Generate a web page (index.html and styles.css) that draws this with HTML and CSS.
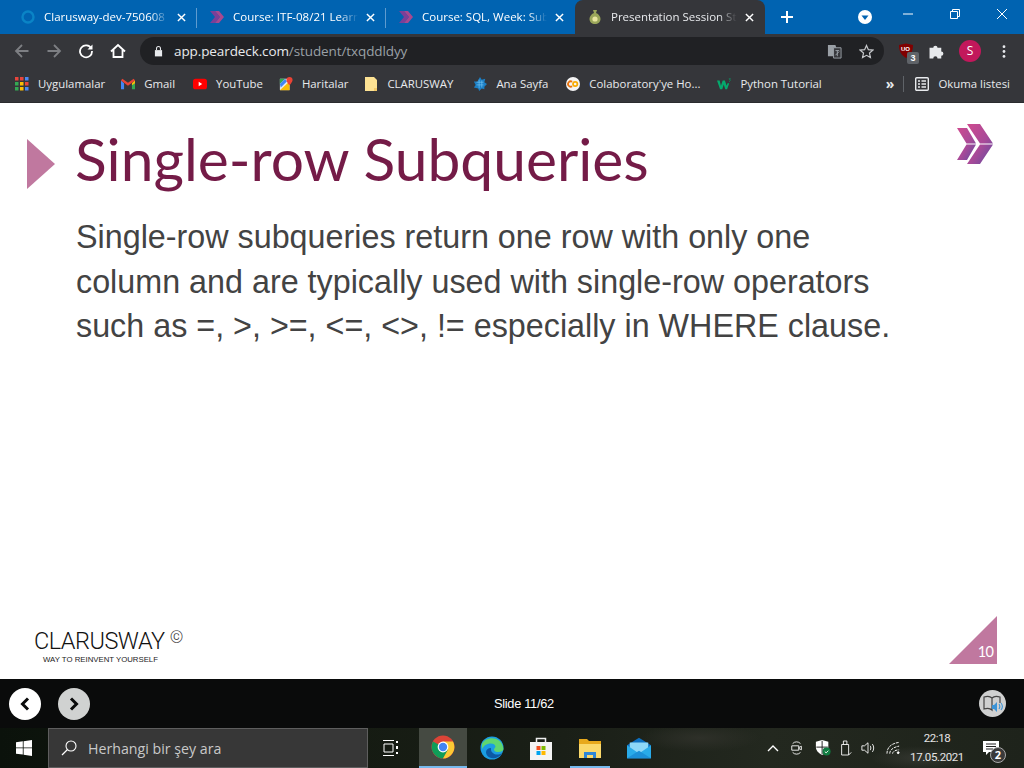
FILE: index.html
```html
<!DOCTYPE html>
<html lang="tr">
<head>
    <meta charset="UTF-8">
    <title>Presentation Session Student</title>
    <link rel="stylesheet" href="styles.css">
</head>
<body>
    <div class="tabbar">
        <div class="tab">
            <svg class="tab-icon" viewBox="0 0 16 16"><circle cx="8" cy="8" r="5.5" fill="none" stroke="#0a84c6" stroke-width="2.4"/></svg>
            <span class="tab-title">Clarusway-dev-750608</span>
            <svg class="tab-close" viewBox="0 0 10 10"><path d="M1 1l8 8M9 1l-8 8"/></svg>
        </div>
        <div class="tab-sep"></div>
        <div class="tab">
            <svg class="tab-icon" viewBox="0 0 16 16"><path d="M1 2h5l5 6-5 6H1l5-6z" fill="#7b3f98"/><path d="M6 2h4l5 6-5 6H6l5-6z" fill="#a8488f"/></svg>
            <span class="tab-title">Course: ITF-08/21 Learn</span>
            <svg class="tab-close" viewBox="0 0 10 10"><path d="M1 1l8 8M9 1l-8 8"/></svg>
        </div>
        <div class="tab-sep"></div>
        <div class="tab">
            <svg class="tab-icon" viewBox="0 0 16 16"><path d="M1 2h5l5 6-5 6H1l5-6z" fill="#7b3f98"/><path d="M6 2h4l5 6-5 6H6l5-6z" fill="#a8488f"/></svg>
            <span class="tab-title">Course: SQL, Week: Sub</span>
            <svg class="tab-close" viewBox="0 0 10 10"><path d="M1 1l8 8M9 1l-8 8"/></svg>
        </div>
        <div class="tab tab-active">
            <svg class="tab-icon" viewBox="0 0 16 16"><path d="M6 1h4l-1 3c3 1 4.500 4 4.500 6 0 3-2.500 5-5.500 5s-5.500-2-5.500-5c0-2 1.500-5 4.500-6z" fill="#9aa65a"/><circle cx="8" cy="10" r="2.600" fill="#e8e6a0"/></svg>
            <span class="tab-title">Presentation Session Student</span>
            <svg class="tab-close" viewBox="0 0 10 10"><path d="M1 1l8 8M9 1l-8 8"/></svg>
        </div>
        <svg class="new-tab" viewBox="0 0 12 12"><path d="M6 0v12M0 6h12"/></svg>
        <svg class="tab-search" viewBox="0 0 14 14"><circle cx="7" cy="7" r="7" fill="#fff"/><path d="M3.500 5.500h7L7 10z" fill="#0063b1"/></svg>
        <div class="win-controls">
            <svg viewBox="0 0 12 12"><path d="M1 6h10"/></svg>
            <svg viewBox="0 0 12 12"><path d="M1.500 3.500h7v7h-7zM3.500 3.500v-2h7v7h-2"/></svg>
            <svg viewBox="0 0 12 12"><path d="M1 1l10 10M11 1L1 11"/></svg>
        </div>
    </div>

    <div class="toolbar">
        <svg class="tool-icon dim" viewBox="0 0 16 16"><path d="M14.500 8H2M8 2L2 8l6 6"/></svg>
        <svg class="tool-icon dim" viewBox="0 0 16 16"><path d="M1.500 8H14M8 2l6 6-6 6"/></svg>
        <svg class="tool-icon" viewBox="0 0 16 16"><path d="M13.300 5.500A6 6 0 1 0 14 8"/><path class="solid" d="M14.500 1.500v5h-5z"/></svg>
        <svg class="tool-icon" viewBox="0 0 16 16"><path d="M1 8.500L8 2l7 6.500M3.500 7v7h9V7"/></svg>
        <div class="omnibox">
            <svg class="lock" viewBox="0 0 10 12"><path d="M1 5h8v7H1z" fill="#e8eaed"/><path d="M2.800 5V3.200a2.200 2.200 0 0 1 4.400 0V5" fill="none" stroke="#e8eaed" stroke-width="1.200"/></svg>
            <span class="url"><span class="url-host">app.peardeck.com</span>/student/txqddldyy</span>
            <svg class="translate" viewBox="0 0 16 16"><path d="M1 1h8l1 3v9H1z" fill="#9aa0a6"/><path d="M7 4h8v11H7z" fill="#35363a" stroke="#9aa0a6"/><path d="M9 7h4M11 7v6M9 12l4-4" stroke="#9aa0a6" fill="none"/></svg>
            <svg class="star" viewBox="0 0 16 16"><path d="M8 1.500l2 4.500 4.800.5-3.600 3.200 1 4.800L8 12.100l-4.200 2.400 1-4.800L1.200 6.500 6 6z"/></svg>
        </div>
        <div class="ublock">
            <svg viewBox="0 0 16 16"><path d="M1 2l7-1.500L15 2c0 6-2 10-7 13C3 12 1 8 1 2z" fill="#800000"/></svg>
            <span class="ublock-label">UO</span>
            <span class="ublock-badge">3</span>
        </div>
        <svg class="puzzle" viewBox="0.500 0.500 15 15"><path d="M1 5h3.500a2 2 0 1 1 4 0H12v3.500a2 2 0 1 1 0 4V15H8.500a2 2 0 1 0-4 0H1z" fill="#e8eaed"/></svg>
        <div class="avatar">S</div>
        <svg class="dots" viewBox="0 0 4 16"><circle cx="2" cy="2" r="1.700"/><circle cx="2" cy="8" r="1.700"/><circle cx="2" cy="14" r="1.700"/></svg>
    </div>

    <div class="bookmarks">
        <div class="bm bm-apps">
            <svg viewBox="0 0 14 14"><g>
                <rect x="0" y="0" width="3.500" height="3.500" fill="#e8453c"/><rect x="5" y="0" width="3.500" height="3.500" fill="#e8453c"/><rect x="10" y="0" width="3.500" height="3.500" fill="#4a89f3"/>
                <rect x="0" y="5" width="3.500" height="3.500" fill="#34a853"/><rect x="5" y="5" width="3.500" height="3.500" fill="#fbbc05"/><rect x="10" y="5" width="3.500" height="3.500" fill="#e8453c"/>
                <rect x="0" y="10" width="3.500" height="3.500" fill="#34a853"/><rect x="5" y="10" width="3.500" height="3.500" fill="#fbbc05"/><rect x="10" y="10" width="3.500" height="3.500" fill="#4a89f3"/>
            </g></svg>
            Uygulamalar
        </div>
        <div class="bm bm-gmail">
            <svg viewBox="0 0 16 12"><path d="M0 2v10h3.500V5z" fill="#4285f4"/><path d="M16 2v10h-3.500V5z" fill="#34a853"/><path d="M0 2l8 6 8-6-1.500-2L8 4.500 1.500 0z" fill="#ea4335"/><path d="M12.500 5L16 2v3l-3.500 2.500z" fill="#fbbc05"/></svg>
            Gmail
        </div>
        <div class="bm bm-youtube">
            <svg viewBox="0 0 16 12"><rect width="16" height="12" rx="3" fill="#f00"/><path d="M6.500 3.500v5L10.500 6z" fill="#fff"/></svg>
            YouTube
        </div>
        <div class="bm bm-maps">
            <svg viewBox="0 0 16 16"><path d="M1 2h11v13H1z" fill="#e8eaed"/><path d="M1 2h6L1 8z" fill="#34a853"/><path d="M1 15L11 6l1 1v8z" fill="#fbbc05"/><path d="M1 8l6-6 2 3-7 7z" fill="#4285f4"/><path d="M12 0a3.500 3.500 0 0 1 3.500 3.500C15.500 6 12 9.500 12 9.500S8.500 6 8.500 3.500A3.500 3.500 0 0 1 12 0z" fill="#ea4335"/></svg>
            Haritalar
        </div>
        <div class="bm bm-folder">
            <svg viewBox="0 0 12 14"><path d="M0 0h9l3 3v11H0z" fill="#fde293"/><path d="M9 11h3v3H9z" fill="#f3c969"/></svg>
            CLARUSWAY
        </div>
        <div class="bm bm-home">
            <svg viewBox="0 0 16 16"><path d="M8 0l2 3 4-1-1 4 3 2-3 3v3l-3-1-3 3-1-3-5-1 2-3-2-4 4 0z" fill="#1c7fc4"/><path d="M4 6h8M4 9h8M7 3v10M10 4v8" stroke="#6fc0ef" stroke-width=".8"/></svg>
            Ana Sayfa
        </div>
        <div class="bm bm-colab">
            <svg viewBox="0 0 16 16"><circle cx="8" cy="8" r="8" fill="#f4f4f4"/><path d="M7 5.500a3 3 0 1 0 0 5" fill="none" stroke="#e8710a" stroke-width="2"/><circle cx="10.500" cy="8" r="2.500" fill="none" stroke="#f9ab00" stroke-width="2"/></svg>
            Colaboratory'ye Ho...
        </div>
        <div class="bm bm-w3">
            <svg viewBox="0 0 16 12"><path d="M0 2h3l1.500 6L6.500 2H9l2 6 1-3h2l-2.500 7H9.500L7.700 6.500 6 12H3.500z" fill="#04aa6d"/><path d="M13.500 0h2l-1 1.200c1 .3.800 2-.8 1.800" fill="none" stroke="#04aa6d" stroke-width=".7"/></svg>
            Python Tutorial
        </div>
        <span class="bm-more">»</span>
        <div class="bm-sep"></div>
        <div class="bm bm-reading">
            <svg viewBox="0 0 14 14"><rect x=".7" y=".7" width="12.600" height="12.600" rx="1" fill="none" stroke="#e8eaed" stroke-width="1.400"/><path d="M3 4h2M3 7h2M3 10h2M6.500 4h4.500M6.500 7h4.500M6.500 10h4.500" stroke="#e8eaed" stroke-width="1.300"/></svg>
            Okuma listesi
        </div>
    </div>

    <main class="slide">
        <div class="slide-head">
            <div class="head-arrow"></div>
            <h1 class="slide-title">Single-row Subqueries</h1>
            <svg class="slide-mark" viewBox="0 0 36 40">
                <defs><linearGradient id="mark" x1="0" y1="0" x2="1" y2="1"><stop offset="0" stop-color="#cf4a8f"/><stop offset=".55" stop-color="#a84a98"/><stop offset="1" stop-color="#5d4aa0"/></linearGradient></defs>
                <path d="M0 4h10l9 15.500H9.500zM9.500 20.500H19L10 36H0z" fill="url(#mark)"/>
                <path d="M10 0h13l13 19.500H23zM23 20.500h13L23 40H10z" fill="url(#mark)"/>
            </svg>
        </div>
        <p class="slide-text">Single-row subqueries return one row with only one column and are typically used with single-row operators such as =, &gt;, &gt;=, &lt;=, &lt;&gt;, != especially in WHERE clause.</p>
        <div class="slide-foot">
            <div class="logo">
                <div class="logo-name">CLARUSWAY<span class="logo-c">©</span></div>
                <div class="logo-sub">WAY TO REINVENT YOURSELF</div>
            </div>
            <div class="page-corner"><span class="page-num">10</span></div>
        </div>
    </main>

    <div class="deck-nav">
        <div class="deck-btns">
            <button class="deck-btn"><svg viewBox="0 0 10 14"><path d="M8 1.500L2.500 7 8 12.500"/></svg></button>
            <button class="deck-btn deck-btn-next"><svg viewBox="0 0 10 14"><path d="M2 1.500L7.500 7 2 12.500"/></svg></button>
        </div>
        <span class="deck-count">Slide 11/62</span>
        <div class="deck-audio">
            <svg viewBox="0 0 20 18"><path d="M1 2c3-1 6-1 8 1v12c-2-2-5-2-8-1z" fill="none" stroke="#444" stroke-width="1.200"/><path d="M9 3c2-2 5-2 8-1v6" fill="none" stroke="#444" stroke-width="1.200"/><path d="M9 10h2l3-3v10l-3-3H9z" fill="#3c93d6"/><path d="M16 9c1 1.500 1 3.500 0 5M18 8c1.600 2 1.600 5 0 7" fill="none" stroke="#3c93d6" stroke-width="1.100"/></svg>
        </div>
    </div>

    <footer class="taskbar">
        <svg class="start" viewBox="0 0 16 16"><path d="M0 2.300l6.800-1v6.200H0zM7.600 1.200L16 0v7.500H7.600zM0 8.300h6.800v6.300L0 13.700zM7.600 8.300H16V16l-8.400-1.200z" fill="#fff"/></svg>
        <div class="search-box">
            <svg viewBox="0 0 16 16"><circle cx="10" cy="6" r="5" fill="none" stroke="#fff" stroke-width="1.100"/><path d="M6.500 9.500L1 15" stroke="#fff" stroke-width="1.200"/></svg>
            <span>Herhangi bir şey ara</span>
        </div>
        <svg class="task-view" viewBox="0 0 16 16"><path d="M0 .5h11M0 15.500h11M1 4h9v8H1z" fill="none" stroke="#fff"/><path d="M14 1v2M14 6v3M14 12v2" stroke="#fff" stroke-width="2"/></svg>
        <div class="task-app task-chrome">
            <svg viewBox="0 0 24 24"><circle cx="12" cy="12" r="11.500" fill="#db4437"/><path d="M12 12L2 6.500A11.500 11.500 0 0 0 12 23.500l5.500-9.500z" fill="#0f9d58"/><path d="M12 6.500h10A11.500 11.500 0 0 1 12 23.500l5-9z" fill="#fcc934"/><circle cx="12" cy="12" r="5.400" fill="#fff"/><circle cx="12" cy="12" r="4.200" fill="#4285f4"/></svg>
        </div>
        <div class="task-app">
            <svg viewBox="0 0 24 24"><circle cx="12" cy="12" r="11.500" fill="#1b9de2"/><path d="M2 8c3-8 20-9 21.500 5 0 2-2.500 3-5 3-4 0-6-2-3-5 0-2-2-4-6-3.500C6 8 3.500 10 2 13z" fill="#5fd66f"/><path d="M6 16c0 5 6 8 12 5 2-1 3-2 4-4-3 2-7 2-9 0-2-1-2-3-2-5-3 0-5 2-5 4z" fill="#0c59a4"/></svg>
        </div>
        <div class="task-app">
            <svg viewBox="0 0 24 24"><path d="M1 6h22v18H1z" fill="#f4f4f4"/><path d="M7.500 7V2.500h9V7" fill="none" stroke="#eee" stroke-width="1.500"/><rect x="7.500" y="10" width="4" height="4" fill="#f25022"/><rect x="12.500" y="10" width="4" height="4" fill="#7fba00"/><rect x="7.500" y="15" width="4" height="4" fill="#00a4ef"/><rect x="12.500" y="15" width="4" height="4" fill="#ffb900"/></svg>
        </div>
        <div class="task-app task-open">
            <svg viewBox="0 0 24 24"><path d="M1 3h8l2 2h12v17H1z" fill="#e8a91c"/><path d="M1 8h22v14H1z" fill="#fbd96b"/><path d="M6 16h12v6h-3v-3H9v3H6z" fill="#2f86d6"/></svg>
        </div>
        <div class="task-app">
            <svg viewBox="0 0 26 24"><path d="M0 9L13 1l13 8v14H0z" fill="#0c6fc0"/><path d="M3 6h20v10l-10 5-10-5z" fill="#8ed8f8"/><path d="M0 9l13 9 13-9v14H0z" fill="#29abe9"/><path d="M0 23l13-8 13 8z" fill="#1c90d8"/></svg>
        </div>
        <div class="tray">
            <svg class="tray-chevron" viewBox="0 0 12 8"><path d="M1 7l5-5 5 5"/></svg>
            <svg class="tray-wide" viewBox="0 0 16 18"><path d="M3 4a6 6 0 0 1 9 0M3 14a6 6 0 0 0 9 0"/><path d="M2 6.500h8v5H2zM10 8.500l3-1.500v4l-3-1.500"/></svg>
            <svg class="tray-shield tray-wide" viewBox="0 0 18 18"><path d="M8 0l7 2v6c0 4-3 7-7 9-4-2-7-5-7-9V2z" fill="#fff"/><path d="M8 1v7h6.500M1.500 8H8v8" stroke="#111" fill="none"/><circle cx="13" cy="13" r="4.500" fill="#107c41"/><path d="M11 13l1.500 1.500L15 12" stroke="#fff"/></svg>
            <svg viewBox="0 0 16 18"><path d="M3 5h8v12H3zM5 5V1h4v4"/><path d="M11 17l3-3"/></svg>
            <svg viewBox="0 0 16 16"><path d="M1 5.500h3l4-3.500v12l-4-3.500H1zM10.500 5.500c1 1.500 1 3.500 0 5M13 3.500c2 2.500 2 6.500 0 9"/></svg>
            <svg class="tray-wifi tray-wide" viewBox="0 0 16 14"><path d="M1 13C1 6 6 2 14 1M4 13c0-4 4-7 10-8M7 13c0-2 3-4 7-4" stroke-dasharray="3 1"/><circle cx="13" cy="12" r="1" fill="#fff"/></svg>
        </div>
        <div class="clock"><span>22:18</span><span>17.05.2021</span></div>
        <div class="notify">
            <svg viewBox="0 0 16 14"><path d="M0 0h16v11H6l-3 3v-3H0z" fill="#fff"/><path d="M3 3h10M3 5.500h10M3 8h7" stroke="#222"/></svg>
            <span class="notify-count">2</span>
        </div>
    </footer>
</body>
</html>
```

FILE: styles.css
```css
* {
    box-sizing: border-box;
}
html, body {
    margin: 0;
    height: 100%;
}
body {
    width: 1024px;
    height: 768px;
    overflow: hidden;
    display: flex;
    flex-direction: column;
    font-family: "Open Sans", "Noto Sans", sans-serif;
    background: #fff;
}
svg {
    display: block;
    flex: none;
}

/* browser tabs */
.tabbar {
    height: 34px;
    flex: none;
    display: flex;
    align-items: flex-end;
    padding-left: 8px;
    background: #0063b1;
    color: #fff;
}
.tab {
    width: 188px;
    height: 34px;
    flex: none;
    display: flex;
    align-items: center;
    padding: 0 10px 0 12px;
    font-size: 11.5px;
}
.tab-sep {
    width: 1px;
    height: 20px;
    margin-bottom: 6px;
    flex: none;
    background: #5f9bcf;
}
.tab-active {
    margin-left: 1px;
    width: 190px;
    background: #35363a;
    border-radius: 8px 8px 0 0;
    padding: 0 11px 0 12px;
    color: #e8eaed;
}
.tab-icon {
    width: 16px;
    height: 16px;
    margin-right: 8px;
}
.tab-title {
    flex: 1;
    overflow: hidden;
    white-space: nowrap;
    padding-bottom: 2px;
    -webkit-mask-image: linear-gradient(90deg, #000 85%, transparent);
    mask-image: linear-gradient(90deg, #000 85%, transparent);
}
.tab-close {
    width: 9px;
    height: 9px;
    margin-left: 8px;
    fill: none;
    stroke: #fff;
    stroke-width: 1.600;
}
.new-tab {
    width: 12px;
    height: 12px;
    margin: 0 0 11px 16px;
    fill: none;
    stroke: #fff;
    stroke-width: 2;
}
.tab-search {
    width: 14px;
    height: 14px;
    margin: 0 0 10px 65px;
}
.win-controls {
    display: flex;
    gap: 35px;
    margin: 0 0 14px 30px;
}
.win-controls svg {
    width: 12px;
    height: 12px;
    fill: none;
    stroke: #fff;
}

/* toolbar */
.toolbar {
    height: 34px;
    flex: none;
    display: flex;
    align-items: center;
    padding-left: 14px;
    background: #35363a;
}
.tool-icon {
    width: 16px;
    height: 16px;
    margin-right: 16px;
    fill: none;
    stroke: #fff;
    stroke-width: 1.800;
}
.tool-icon.dim {
    stroke: #7d7f83;
}
.tool-icon .solid {
    fill: #fff;
    stroke: none;
}
.omnibox {
    width: 744px;
    height: 28px;
    margin-left: -2px;
    display: flex;
    align-items: center;
    padding: 0 10px 0 14px;
    border-radius: 14px;
    background: #202124;
    font-size: 13.500px;
}
.lock {
    width: 9px;
    height: 12px;
    margin-right: 11px;
}
.url {
    flex: 1;
    color: #9aa0a6;
    letter-spacing: -0.1px;
}
.url-host {
    color: #e8eaed;
}
.translate {
    width: 15px;
    height: 15px;
    margin-right: 17px;
}
.star {
    width: 15px;
    height: 15px;
    fill: none;
    stroke: #c6c8cb;
    stroke-width: 1.300;
}
.ublock {
    position: relative;
    width: 16px;
    height: 16px;
    margin-left: 14px;
}
.ublock-label {
    position: absolute;
    left: 3px;
    top: 3px;
    font: bold 6px "Liberation Sans", sans-serif;
    color: #fff;
}
.ublock-badge {
    position: absolute;
    left: 9px;
    top: 9px;
    width: 12px;
    height: 12px;
    border-radius: 2px;
    background: #5f6368;
    color: #fff;
    font: bold 9px/12px "Liberation Sans", sans-serif;
    text-align: center;
}
.puzzle {
    width: 16px;
    height: 16px;
    margin-left: 15px;
}
.avatar {
    width: 22px;
    height: 22px;
    margin-left: 14px;
    border-radius: 50%;
    background: #c2185b;
    color: #fff;
    font-size: 12px;
    line-height: 22px;
    text-align: center;
}
.dots {
    width: 4px;
    height: 13px;
    margin-left: 21px;
    fill: #e8eaed;
}

/* bookmarks */
.bookmarks {
    height: 35px;
    flex: none;
    display: flex;
    align-items: center;
    padding: 0 14px 3px 15px;
    background: #35363a;
    border-bottom: 1px solid #2a2b2e;
    color: #e8eaed;
    font-size: 11.400px;
    white-space: nowrap;
}
.bm {
    display: flex;
    align-items: center;
    gap: 9px;
}
.bm svg {
    width: 14px;
    height: 14px;
}
.bm-gmail { margin-left: 16px; }
.bm-youtube { margin-left: 18px; }
.bm-maps { margin-left: 16px; }
.bm-folder { margin-left: 16px; }
.bm-home { margin-left: 20px; }
.bm-colab { margin-left: 18px; }
.bm-w3 { margin-left: 17px; }
.bm-more {
    margin-left: auto;
    font-size: 14px;
    line-height: 14px;
    font-weight: 700;
}
.bm-sep {
    width: 1px;
    height: 16px;
    margin: 0 11px 0 9px;
    background: #5f6368;
}

/* slide */
.slide {
    flex: 1;
    display: flex;
    flex-direction: column;
    background: #fff;
    min-height: 0;
}
.slide-head {
    display: flex;
    align-items: center;
    padding: 23px 31px 0 27px;
}
.head-arrow {
    width: 0;
    height: 0;
    flex: none;
    border-left: 28px solid #c0789f;
    border-top: 25px solid transparent;
    border-bottom: 25px solid transparent;
    margin-right: 20px;
    margin-top: 9px;
}
.slide-title {
    flex: 1;
    margin: 0;
    font-family: Lato, "Noto Sans", sans-serif;
    font-size: 58.700px;
    line-height: 66px;
    font-weight: 400;
    color: #741b47;
}
.slide-mark {
    width: 36px;
    height: 40px;
    align-self: flex-start;
    margin-top: -2px;
}
.slide-text {
    width: 825px;
    margin: 23px 0 0 76px;
    font-family: "Liberation Sans", Arial, sans-serif;
    font-size: 32.300px;
    line-height: 44.500px;
    color: #434343;
}
.slide-foot {
    margin-top: auto;
    display: flex;
    justify-content: space-between;
    align-items: flex-end;
    padding: 0 27px 15px 34px;
}
.logo {
    color: #111;
    margin-bottom: -1px;
}
.logo-name {
    font-family: Roboto, "Liberation Sans", sans-serif;
    font-size: 23.500px;
    font-weight: 300;
    line-height: 24px;
    letter-spacing: -0.5px;
}
.logo-c {
    font-size: 17px;
    vertical-align: 6px;
    margin-left: 5px;
    color: #333;
}
.logo-sub {
    margin: 2px 0 0 9px;
    font-family: "Liberation Sans", Arial, sans-serif;
    font-size: 7.800px;
    line-height: 10px;
    color: #222;
}
.page-corner {
    position: relative;
    width: 48px;
    height: 48px;
    background: #c0789f;
    clip-path: polygon(100% 0, 100% 100%, 0 100%);
}
.page-num {
    position: absolute;
    right: 4px;
    bottom: 4px;
    font-family: Lato, sans-serif;
    font-size: 14.500px;
    letter-spacing: -0.8px;
    line-height: 16px;
    color: #fff;
}

/* slide navigation */
.deck-nav {
    height: 49px;
    flex: none;
    display: flex;
    align-items: center;
    justify-content: space-between;
    position: relative;
    padding: 0 29px 0 9px;
    background: #0a0b0b;
}
.deck-btns {
    display: flex;
    gap: 17px;
}
.deck-btn {
    width: 32px;
    height: 32px;
    padding: 0;
    border: 0;
    border-radius: 50%;
    background: #fff;
    display: flex;
    align-items: center;
    justify-content: center;
}
.deck-btn-next {
    background: #d0d2d1;
}
.deck-btn svg {
    width: 10px;
    height: 14px;
    fill: none;
    stroke: #0a0b0b;
    stroke-width: 3;
}
.deck-count {
    position: absolute;
    left: 494px;
    top: 17px;
    font-family: "Liberation Sans", Arial, sans-serif;
    font-size: 12.800px;
    letter-spacing: -0.3px;
    color: #fff;
}
.deck-audio {
    width: 27px;
    height: 27px;
    margin-right: -11px;
    border-radius: 50%;
    background: #cfd0d0;
    display: flex;
    align-items: center;
    justify-content: center;
}
.deck-audio svg {
    width: 20px;
    height: 18px;
}

/* windows taskbar */
.taskbar {
    height: 40px;
    flex: none;
    display: flex;
    align-items: center;
    background:
        radial-gradient(ellipse 60px 14px at 700px 10px, #2e3029, transparent),
        radial-gradient(ellipse 50px 12px at 920px 30px, #33362f, transparent),
        linear-gradient(90deg, #0b120b 0%, #141a11 30%, #1a1f17 55%, #23281f 75%, #1e231b 100%);
    color: #fff;
}
.start {
    width: 16px;
    height: 16px;
    margin: 0 16px;
}
.search-box {
    width: 320px;
    height: 40px;
    display: flex;
    align-items: center;
    gap: 11px;
    padding-left: 12px;
    background: #373737;
    border: 1px solid #5e5e5e;
    color: #c9c9c9;
    font-size: 14.200px;
}
.search-box svg {
    width: 16px;
    height: 16px;
}
.task-view {
    width: 16px;
    height: 16px;
    margin: 0 20px 0 15px;
}
.task-app {
    width: 49px;
    height: 40px;
    display: flex;
    align-items: center;
    justify-content: center;
    padding-bottom: 1px;
}
.task-app svg {
    width: 24px;
    height: 24px;
}
.task-chrome {
    width: 48px;
    background: #454a42;
    border-bottom: 2px solid #76b9ed;
}
.task-open {
    background: linear-gradient(#76b9ed, #76b9ed) center bottom / 40px 2px no-repeat;
}
.tray {
    display: flex;
    align-items: center;
    gap: 8px;
    margin-left: 104px;
}
.tray svg {
    width: 14px;
    height: 16px;
    fill: none;
    stroke: #fff;
    stroke-width: 1;
}
.tray .tray-wide {
    margin-left: 3px;
}
.tray .tray-chevron {
    width: 12px;
    height: 8px;
    stroke-width: 1.400;
}
.tray .tray-shield {
    width: 16px;
    height: 16px;
    stroke: none;
}
.tray .tray-wifi {
    width: 15px;
    height: 14px;
}
.clock {
    width: 64px;
    margin-left: 4px;
    display: flex;
    flex-direction: column;
    align-items: center;
    gap: 4px;
    font-family: Roboto, sans-serif;
    font-size: 11.500px;
    letter-spacing: -0.4px;
    line-height: 15px;
    color: #e6e6e6;
}
.notify {
    position: relative;
    margin-left: 14px;
}
.notify svg {
    width: 16px;
    height: 14px;
}
.notify-count {
    position: absolute;
    left: 7px;
    top: 6px;
    width: 16px;
    height: 16px;
    border-radius: 50%;
    background: #3a3a3a;
    border: 1px solid #aaa;
    font-size: 11px;
    font-weight: 700;
    line-height: 14px;
    text-align: center;
}
```
